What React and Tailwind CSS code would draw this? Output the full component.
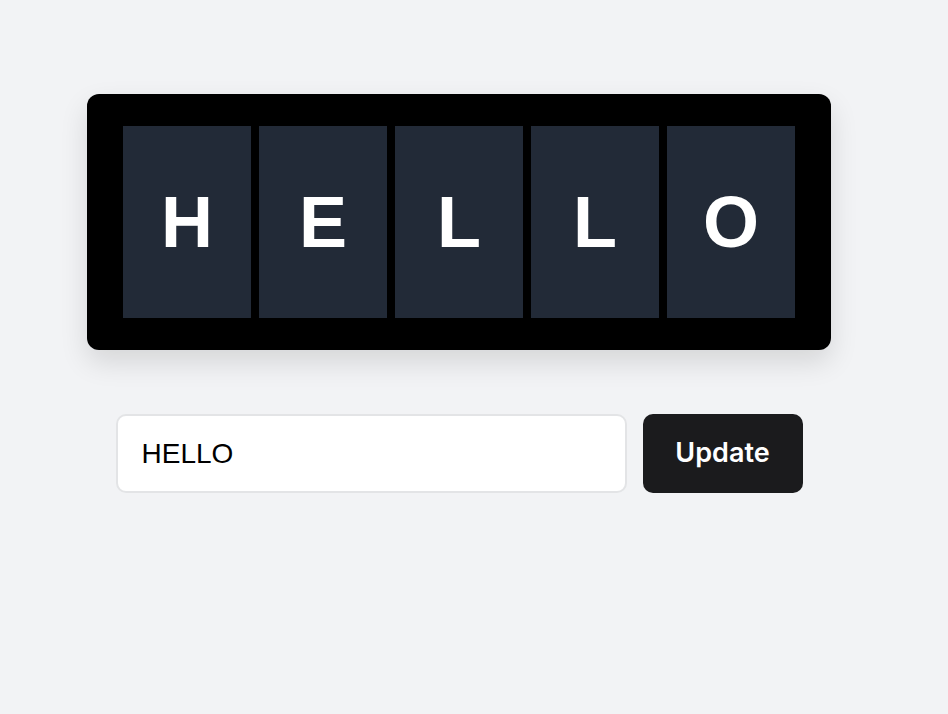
import { useState } from 'react'

export default function App() {
  const [value, setValue] = useState('HELLO')
  const [word, setWord] = useState('HELLO')

  return (
    <div className="min-h-screen w-full bg-[#f2f3f5] pt-[94px] pl-[87px] font-['Liberation_Sans',Arial,sans-serif]">
      <div className="w-[744px] flex flex-col items-center">
        {/* Board */}
        <div className="w-[744px] bg-black rounded-xl px-9 py-8 flex gap-2 shadow-[0_12px_28px_rgba(0,0,0,0.12)]">
          {word.split('').map((ch, i) => (
            <div key={i} className="w-32 h-48 bg-[#222a37] flex items-center justify-center">
              <span className="text-white text-[72px] font-bold leading-none">{ch}</span>
            </div>
          ))}
        </div>

        {/* Controls */}
        <div className="mt-16 flex gap-4 items-stretch">
          <input
            value={value}
            onChange={e => setValue(e.target.value)}
            className="w-[511px] h-[79px] bg-white border-2 border-[#e3e4e6] rounded-[10px] px-6 text-[28px] text-black outline-none font-['Liberation_Sans',Arial,sans-serif]"
          />
          <button
            onClick={() => setWord(value.toUpperCase())}
            className="w-[160px] h-[79px] bg-[#1b1b1d] text-white rounded-[10px] text-[27px] font-semibold font-['Inter',sans-serif]"
          >
            Update
          </button>
        </div>
      </div>
    </div>
  )
}
